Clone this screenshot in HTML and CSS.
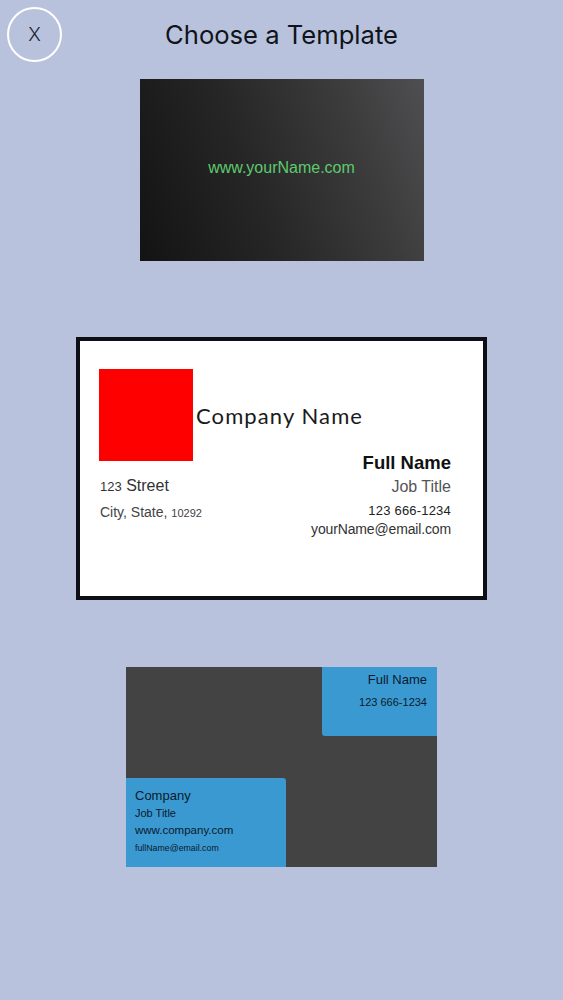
FILE: index.html
```html
<!DOCTYPE html>
<html lang="en">
<head>
<meta charset="utf-8">
<title>Choose a Template</title>
<link rel="stylesheet" href="styles.css">
</head>
<body>
<header class="topbar">
  <button class="close-btn" type="button">X</button>
  <h1 class="title">Choose a Template</h1>
  <span class="spacer"></span>
</header>

<main class="templates">
  <div class="card card-dark">
    <span class="site">www.yourName.com</span>
  </div>

  <div class="card card-classic">
    <div class="classic-head">
      <div class="logo-square"></div>
      <span class="company-name">Company Name</span>
    </div>
    <div class="classic-body">
      <div class="address">
        <div class="addr-line1"><span class="num">123</span> Street</div>
        <div class="addr-line2">City, State, <span class="zip">10292</span></div>
      </div>
      <div class="contact">
        <div class="c-name">Full Name</div>
        <div class="c-title">Job Title</div>
        <div class="c-phone">123 666-1234</div>
        <div class="c-email">yourName@email.com</div>
      </div>
    </div>
  </div>

  <div class="card card-blocks">
    <div class="block block-top">
      <div class="bt-name">Full Name</div>
      <div class="bt-phone">123 666-1234</div>
    </div>
    <div class="block block-bottom">
      <div class="bb-company">Company</div>
      <div class="bb-title">Job Title</div>
      <div class="bb-web">www.company.com</div>
      <div class="bb-email">fullName@email.com</div>
    </div>
  </div>
</main>
</body>
</html>
```

FILE: styles.css
```css
* { box-sizing: border-box; }

html, body {
  margin: 0;
  padding: 0;
}

body {
  background: #b8c2dc;
  font-family: "Liberation Sans", Arial, sans-serif;
  width: 563px;
  min-height: 1000px;
}

.topbar {
  display: grid;
  grid-template-columns: 1fr auto 1fr;
  align-items: center;
  height: 68px;
  padding: 0 7px;
}

.close-btn {
  justify-self: start;
  width: 55px;
  height: 55px;
  border-radius: 50%;
  border: 2px solid #ffffff;
  background: transparent;
  color: #1b2233;
  font-family: "Inter", "Liberation Sans", sans-serif;
  font-weight: 300;
  font-size: 19px;
  padding: 0;
  margin-top: 1px;
  display: flex;
  align-items: center;
  justify-content: center;
}

.title {
  margin: 0;
  font-family: "Inter", "Liberation Sans", sans-serif;
  font-weight: 400;
  font-size: 25.6px;
  color: #10131a;
}

.templates {
  display: flex;
  flex-direction: column;
  align-items: center;
  padding-top: 11px;
}

/* Card 1 */
.card-dark {
  width: 284px;
  height: 182px;
  background: linear-gradient(70deg, #131313 0%, #262627 40%, #3c3c3d 75%, #4f4f51 100%);
  display: flex;
  align-items: center;
  justify-content: center;
  padding-bottom: 4px;
}

.site {
  color: #5ccb6c;
  font-size: 16px;
}

/* Card 2 */
.card-classic {
  margin-top: 76px;
  width: 411px;
  height: 263px;
  background: #ffffff;
  border: 4px solid #0d0f14;
  padding: 28px 32px 0 19px;
}

.classic-head {
  display: flex;
  align-items: center;
}

.logo-square {
  width: 94px;
  height: 92px;
  background: #ff0000;
}

.company-name {
  margin-left: 3px;
  font-family: "Lato", "Open Sans", sans-serif;
  font-size: 22px;
  letter-spacing: 1.1px;
  color: #1a1a1a;
  white-space: nowrap;
}

.classic-body {
  display: flex;
  justify-content: space-between;
}

.address {
  padding-top: 13px;
  padding-left: 1px;
  color: #333333;
}

.addr-line1 {
  font-size: 16px;
  line-height: 24px;
}

.addr-line1 .num {
  font-size: 13px;
}

.addr-line2 {
  font-size: 14px;
  line-height: 26px;
  color: #444444;
}

.addr-line2 .zip {
  font-size: 11px;
}

.contact {
  margin-top: -9px;
  text-align: right;
}

.c-name {
  font-size: 18.5px;
  font-weight: 700;
  line-height: 22px;
  color: #111111;
}

.c-title {
  font-size: 16px;
  line-height: 25px;
  color: #555555;
}

.c-phone {
  font-size: 13px;
  line-height: 23px;
  color: #222222;
  letter-spacing: 0.2px;
}

.c-email {
  font-size: 14px;
  line-height: 14px;
  color: #333333;
  letter-spacing: -0.15px;
}

/* Card 3 */
.card-blocks {
  margin-top: 67px;
  width: 311px;
  height: 200px;
  background: #424342;
  display: flex;
  flex-direction: column;
  justify-content: space-between;
}

.block {
  background: #3a99d0;
  color: #0b1a2e;
}

.block-top {
  align-self: flex-end;
  width: 115px;
  height: 69px;
  border-bottom-left-radius: 3px;
  padding: 4px 10px 0 0;
  text-align: right;
}

.bt-name {
  font-size: 13px;
  line-height: 17px;
}

.bt-phone {
  font-size: 11px;
  line-height: 28px;
}

.block-bottom {
  align-self: flex-start;
  width: 160px;
  height: 89px;
  border-top-right-radius: 3px;
  padding: 8px 0 0 9px;
}

.bb-company {
  font-size: 13px;
  line-height: 19px;
}

.bb-title {
  font-size: 11px;
  line-height: 16px;
}

.bb-web {
  font-size: 11.5px;
  line-height: 18px;
}

.bb-email {
  font-size: 8.8px;
  line-height: 19px;
}
```
